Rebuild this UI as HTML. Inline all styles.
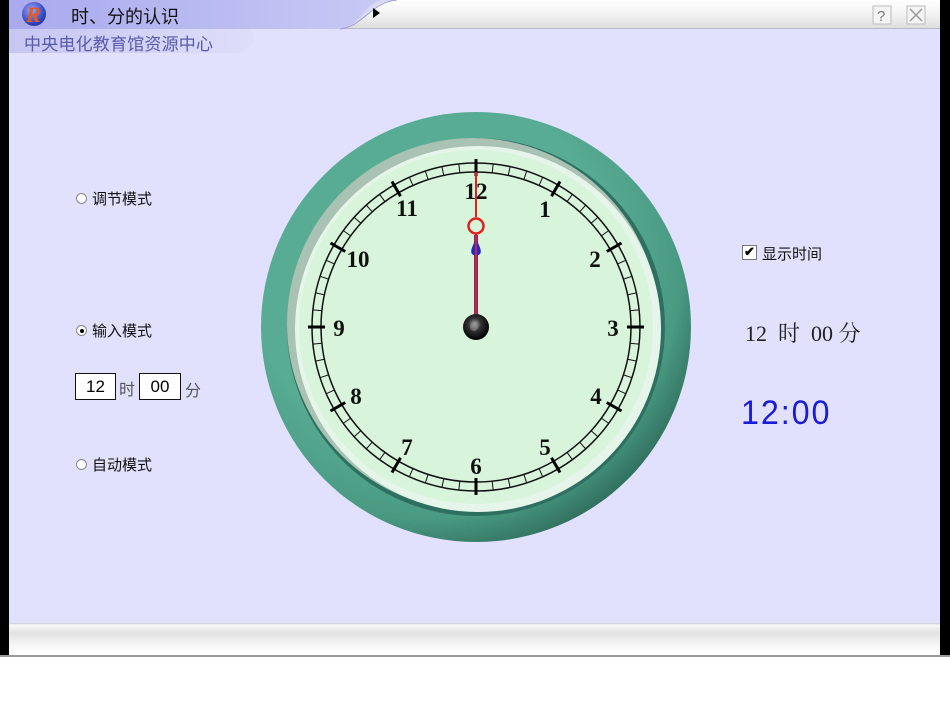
<!DOCTYPE html>
<html><head><meta charset="utf-8"><style>
*{margin:0;padding:0;box-sizing:border-box}
body{width:950px;height:713px;background:#fff;position:relative;overflow:hidden;font-family:"Liberation Sans","Noto Sans CJK SC",sans-serif}
.abs{position:absolute}
.cn{font-family:"Liberation Sans","Noto Sans CJK SC",sans-serif}
</style></head><body>
<div class="abs" style="left:0;top:0;width:950px;height:656px;background:#000"></div>
<div class="abs" style="left:9px;top:0;width:931px;height:656px;background:#e1e1fd"></div>
<svg class="abs" style="left:9px;top:0" width="931" height="56">
<defs>
<linearGradient id="tb" x1="0" y1="0" x2="0" y2="1"><stop offset="0" stop-color="#ffffff"/><stop offset="0.6" stop-color="#eeeeee"/><stop offset="1" stop-color="#dcdcdc"/></linearGradient>
<linearGradient id="pu" x1="0" y1="0" x2="1" y2="0"><stop offset="0" stop-color="#a9a9ee"/><stop offset="1" stop-color="#c9c9f5"/></linearGradient>
<linearGradient id="pu2" x1="0" y1="0" x2="1" y2="0"><stop offset="0" stop-color="#c6c6f2"/><stop offset="1" stop-color="#dedefa"/></linearGradient>
<radialGradient id="lg" cx="0.4" cy="0.35" r="0.6"><stop offset="0" stop-color="#9aa6ff"/><stop offset="1" stop-color="#2b3ab0"/></radialGradient>
</defs>
<rect x="0" y="0" width="931" height="29" fill="url(#tb)"/>
<rect x="0" y="28" width="931" height="1" fill="#b8b8c8"/>
<path d="M0,29 L240,29 C248,34 245,52 228,53 L0,53 Z" fill="url(#pu2)"/>
<path d="M330,29 C355,26 360,2 385,0 L370,0 C350,4 345,20 330,29 Z" fill="#d8d8f4"/>
<path d="M0,0 L372,0 C355,4 352,26 330,29 L0,29 Z" fill="url(#pu)"/>
<path d="M331,29 C355,26 362,2 388,0" fill="none" stroke="#9a9ad8" stroke-width="1"/>
<polygon points="364,8 371,13 364,18" fill="#000"/>
<circle cx="25" cy="14" r="12" fill="url(#lg)"/>
<text x="17" y="22" font-family="Liberation Serif,serif" font-style="italic" font-weight="bold" font-size="22" fill="#e85a1a">R</text>
<rect x="864" y="6" width="18" height="18" fill="#f4f4f4" stroke="#bbb"/>
<text x="868" y="21" font-size="15" fill="#777">?</text>
<rect x="898" y="6" width="18" height="18" fill="#f4f4f4" stroke="#bbb"/>
<path d="M901,9 L913,21 M913,9 L901,21" stroke="#999" stroke-width="1.5"/>
</svg>
<div class="abs cn" style="left:71px;top:3px;font-size:18px;color:#111">时、分的认识</div>
<div class="abs cn" style="left:24px;top:30px;font-size:17px;color:#5a5aaa;letter-spacing:0.2px">中央电化教育馆资源中心</div>

<div class="abs" style="left:9px;top:623px;width:931px;height:33px;background:linear-gradient(#c8c8d8 0,#f8f8f8 2px,#e2e2e2 10px,#f6f6f6 22px,#fff 30px)"></div>
<div class="abs" style="left:0;top:655px;width:950px;height:2px;background:#999"></div>

<div class="abs" style="left:76px;top:193px;width:11px;height:11px;border:1px solid #888;border-radius:50%;background:#fff"></div>
<div class="abs cn" style="left:92px;top:188px;font-size:15px;color:#111">调节模式</div>
<div class="abs" style="left:76px;top:325px;width:11px;height:11px;border:1px solid #888;border-radius:50%;background:#fff"><div style="margin:2.5px;width:4px;height:4px;border-radius:50%;background:#000"></div></div>
<div class="abs cn" style="left:92px;top:320px;font-size:15px;color:#111">输入模式</div>
<div class="abs" style="left:75px;top:373px;width:41px;height:27px;border:1px solid #111;background:#fff;font-size:17px;text-align:center;line-height:25px">12</div>
<div class="abs cn" style="left:119px;top:376px;font-size:16px;color:#555">时</div>
<div class="abs" style="left:139px;top:373px;width:42px;height:27px;border:1px solid #111;background:#fff;font-size:17px;text-align:center;line-height:25px">00</div>
<div class="abs cn" style="left:185px;top:377px;font-size:16px;color:#555">分</div>
<div class="abs" style="left:76px;top:459px;width:11px;height:11px;border:1px solid #888;border-radius:50%;background:#fff"></div>
<div class="abs cn" style="left:92px;top:454px;font-size:15px;color:#111">自动模式</div>

<div class="abs" style="left:742px;top:245px;width:15px;height:15px;border:1px solid #777;background:#fff;font-size:13px;line-height:12px;text-align:center;font-weight:bold">✔</div>
<div class="abs cn" style="left:762px;top:243px;font-size:15px;color:#111">显示时间</div>
<div class="abs" style="left:745px;top:317px;font-size:22px;color:#222;font-family:'Liberation Serif','Noto Serif CJK SC',serif;white-space:pre">12  时  00 分</div>
<div class="abs" style="left:741px;top:394px;font-size:34px;color:#1a1ad8;font-family:'Liberation Sans',sans-serif;letter-spacing:2px;transform:scaleX(0.95);transform-origin:left">12:00</div>

<svg class="abs" style="left:256px;top:107px" width="440" height="440" viewBox="-220 -220 440 440">
<defs>
<radialGradient id="ring" cx="0.38" cy="0.35" r="0.7"><stop offset="0.6" stop-color="#58ac93"/><stop offset="0.85" stop-color="#4a9a82"/><stop offset="1" stop-color="#2f6e5c"/></radialGradient>
<radialGradient id="knob" cx="0.45" cy="0.4" r="0.6"><stop offset="0" stop-color="#bbb"/><stop offset="0.4" stop-color="#333"/><stop offset="1" stop-color="#000"/></radialGradient>
<line id="t" x1="0" y1="-164" x2="0" y2="-155" stroke="#111" stroke-width="1"/>
<line id="h" x1="0" y1="-168" x2="0" y2="-151" stroke="#000" stroke-width="3"/>
</defs>
<circle r="215" fill="url(#ring)"/>
<circle r="189" fill="#2e7060"/>
<circle cx="-3" cy="-3" r="186" fill="#a9c2b4"/>
<circle cx="2" cy="2" r="183" fill="#e6f5ea"/>
<circle r="177" fill="#d8f5dc"/>
<circle r="164" fill="none" stroke="#111" stroke-width="1.5"/>
<circle r="155" fill="none" stroke="#111" stroke-width="1.5"/>
<g>
<use href="#t" transform="rotate(6)"/><use href="#t" transform="rotate(12)"/><use href="#t" transform="rotate(18)"/><use href="#t" transform="rotate(24)"/>
<use href="#t" transform="rotate(36)"/><use href="#t" transform="rotate(42)"/><use href="#t" transform="rotate(48)"/><use href="#t" transform="rotate(54)"/>
<use href="#t" transform="rotate(66)"/><use href="#t" transform="rotate(72)"/><use href="#t" transform="rotate(78)"/><use href="#t" transform="rotate(84)"/>
<use href="#t" transform="rotate(96)"/><use href="#t" transform="rotate(102)"/><use href="#t" transform="rotate(108)"/><use href="#t" transform="rotate(114)"/>
<use href="#t" transform="rotate(126)"/><use href="#t" transform="rotate(132)"/><use href="#t" transform="rotate(138)"/><use href="#t" transform="rotate(144)"/>
<use href="#t" transform="rotate(156)"/><use href="#t" transform="rotate(162)"/><use href="#t" transform="rotate(168)"/><use href="#t" transform="rotate(174)"/>
<use href="#t" transform="rotate(186)"/><use href="#t" transform="rotate(192)"/><use href="#t" transform="rotate(198)"/><use href="#t" transform="rotate(204)"/>
<use href="#t" transform="rotate(216)"/><use href="#t" transform="rotate(222)"/><use href="#t" transform="rotate(228)"/><use href="#t" transform="rotate(234)"/>
<use href="#t" transform="rotate(246)"/><use href="#t" transform="rotate(252)"/><use href="#t" transform="rotate(258)"/><use href="#t" transform="rotate(264)"/>
<use href="#t" transform="rotate(276)"/><use href="#t" transform="rotate(282)"/><use href="#t" transform="rotate(288)"/><use href="#t" transform="rotate(294)"/>
<use href="#t" transform="rotate(306)"/><use href="#t" transform="rotate(312)"/><use href="#t" transform="rotate(318)"/><use href="#t" transform="rotate(324)"/>
<use href="#t" transform="rotate(336)"/><use href="#t" transform="rotate(342)"/><use href="#t" transform="rotate(348)"/><use href="#t" transform="rotate(354)"/>
<use href="#h"/><use href="#h" transform="rotate(30)"/><use href="#h" transform="rotate(60)"/><use href="#h" transform="rotate(90)"/><use href="#h" transform="rotate(120)"/><use href="#h" transform="rotate(150)"/>
<use href="#h" transform="rotate(180)"/><use href="#h" transform="rotate(210)"/><use href="#h" transform="rotate(240)"/><use href="#h" transform="rotate(270)"/><use href="#h" transform="rotate(300)"/><use href="#h" transform="rotate(330)"/>
</g>
<g font-family="Liberation Serif,serif" font-weight="bold" font-size="23" fill="#111" text-anchor="middle">
<text x="0" y="-128">12</text>
<text x="69" y="-110">1</text>
<text x="119" y="-60">2</text>
<text x="137" y="9">3</text>
<text x="120" y="77">4</text>
<text x="69" y="128">5</text>
<text x="0" y="147">6</text>
<text x="-69" y="128">7</text>
<text x="-120" y="77">8</text>
<text x="-137" y="9">9</text>
<text x="-118" y="-60">10</text>
<text x="-69" y="-111">11</text>
</g>
<line x1="0" y1="0" x2="0" y2="-92" stroke="#6a2a8a" stroke-width="4"/>
<path d="M0,-88 C-4,-80 -6,-76 -4,-73 C-2,-71 2,-71 4,-73 C6,-76 4,-80 0,-88 Z" fill="#1a2ad0"/>
<line x1="0" y1="0" x2="0" y2="-94" stroke="#e02020" stroke-width="2"/>
<line x1="0" y1="-110" x2="0" y2="-155" stroke="#e02020" stroke-width="2"/>
<circle cx="0" cy="-101" r="7.5" fill="none" stroke="#e02020" stroke-width="2.5"/>
<circle r="13" fill="url(#knob)"/>
<circle cx="-2" cy="0" r="4" fill="#888" opacity="0.6"/>
</svg>
</body></html>
